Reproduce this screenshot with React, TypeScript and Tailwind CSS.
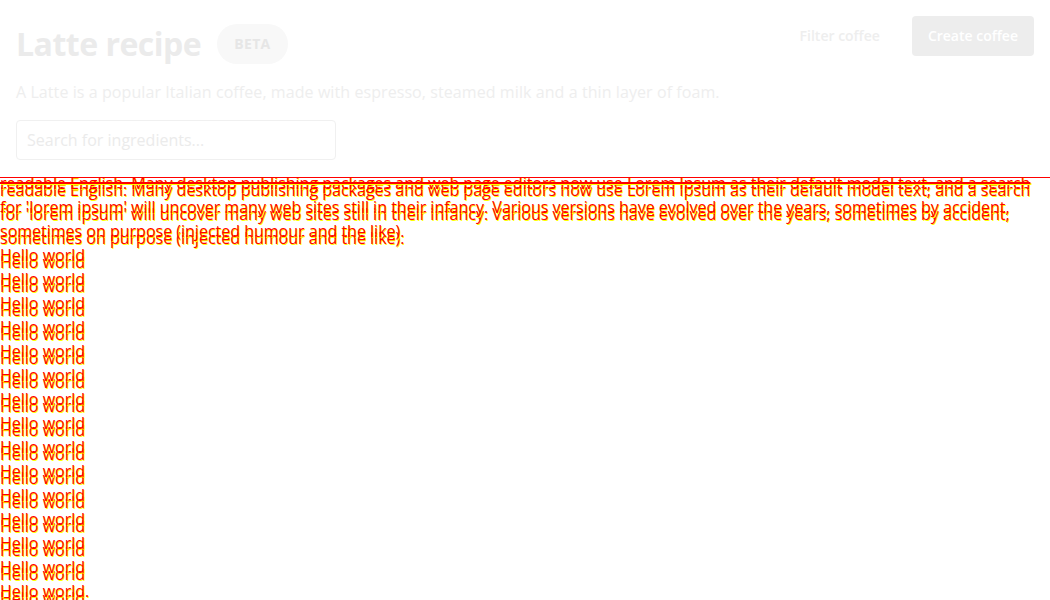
import React from 'react'

const paragraph =
    "readable English. Many desktop publishing packages and web page editors now use Lorem Ipsum as their default model text, and a search for 'lorem ipsum' will uncover many web sites still in their infancy. Various versions have evolved over the years, sometimes by accident, sometimes on purpose (injected humour and the like)."

const hellos = Array.from({ length: 15 }, (_, i) => (i === 14 ? 'Hello world.' : 'Hello world'))

function TextBlock({ top }: { top?: boolean }) {
    return (
        <div
            className={
                top
                    ? 'absolute left-0 right-0 top-[-7px] first-line:line-through first-line:decoration-2 first-line:decoration-[#ff0000]'
                    : ''
            }
        >
            <p>{paragraph}</p>
            {hellos.map((h, i) => (
                <p key={i}>{h}</p>
            ))}
        </div>
    )
}

export default function App() {
    return (
        <div className="w-[1050px] h-[600px] overflow-hidden bg-white font-['Open_Sans',sans-serif]">
            <header className="px-4 pt-4">
                <div className="flex justify-between">
                    <div>
                        <div className="flex items-center gap-4 h-14">
                            <h1 className="text-[32px] font-bold text-[#ebebeb] tracking-[-0.5px]">Latte recipe</h1>
                            <span className="h-10 px-[17px] flex items-center rounded-full bg-[#f8f8f8] text-[#e6e6e6] text-sm font-bold tracking-wide">
                                BETA
                            </span>
                        </div>
                        <p className="mt-2 text-base leading-6 text-[#eeeeee] tracking-[0.08px]">
                            A Latte is a popular Italian coffee, made with espresso, steamed milk and a thin layer of foam.
                        </p>
                        <input
                            className="mt-4 w-80 h-10 px-[10px] border border-[#f0f0f0] rounded-sm text-base placeholder:text-[#ebebeb] outline-none"
                            placeholder="Search for ingredients..."
                        />
                    </div>
                    <div className="flex items-start gap-4">
                        <button className="h-10 px-4 whitespace-nowrap text-sm font-semibold text-[#eeeeee]">Filter coffee</button>
                        <button className="h-10 px-4 whitespace-nowrap rounded-sm bg-[#ededed] text-sm font-semibold text-white">
                            Create coffee
                        </button>
                    </div>
                </div>
            </header>
            <section className="relative mt-[17px] border-t border-[#ff0000] text-base leading-6 text-[#ff0000] [text-shadow:1px_1px_0_#ffff00]">
                <TextBlock />
                <TextBlock top />
            </section>
        </div>
    )
}
